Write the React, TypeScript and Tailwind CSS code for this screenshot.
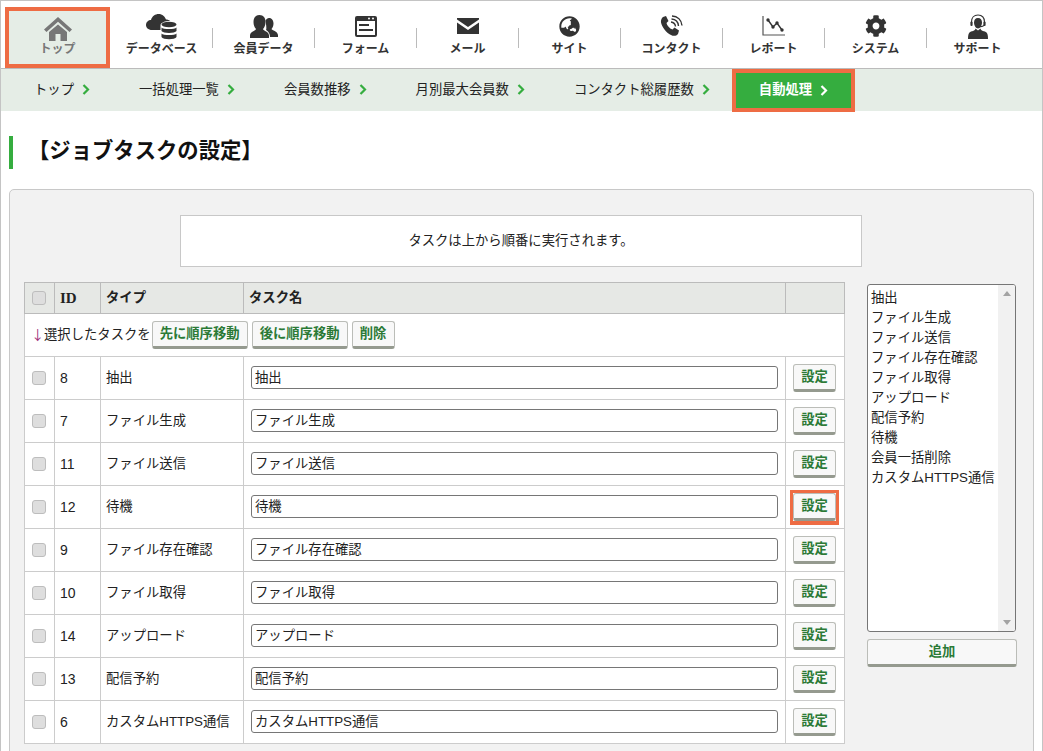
import { FaCog, FaGlobeAsia } from "react-icons/fa";

const FONT = "font-['Liberation_Sans','Noto_Sans_CJK_JP',sans-serif]";

function HomeIcon() {
  return (
    <svg width="28" height="24" viewBox="0 0 28 24" fill="#777">
      <path d="M14 0 L28 12.5 L25.5 15 L14 4.8 L2.5 15 L0 12.5 Z" />
      <path d="M5 15 L14 7.5 L23 15 V24 H16.5 V17 H11.5 V24 H5 Z" />
    </svg>
  );
}

function CloudDbIcon() {
  return (
    <svg width="31" height="27" viewBox="0 0 31 27" fill="#333">
      <path d="M6 17 C2 17 0 14.5 0 12 C0 9 2.5 7 5 7 C6 3 9.5 1 12.5 1 C16.5 1 19 3.5 20 6.5 C21.5 6.5 23 7 24 8 C19 8 15 9.5 14.5 12 V17 Z" />
      <ellipse cx="23" cy="11.5" rx="7.5" ry="2.8" />
      <path d="M15.5 14.5 C17 16.5 29 16.5 30.5 14.5 V18 C29 20.5 17 20.5 15.5 18 Z" />
      <path d="M15.5 20.5 C17 22.5 29 22.5 30.5 20.5 V24 C29 27 17 27 15.5 24 Z" />
    </svg>
  );
}

function UsersIcon() {
  return (
    <svg width="28" height="23" viewBox="0 0 28 23" fill="#333">
      <path d="M19 3 C22 3 23.5 5.5 23.5 8.5 C23.5 11 22.5 13 21.5 14 C22 15.5 27.5 16 28 20 V22 H20 C20 17.5 17 15.5 16 15 C17 14 15.5 6 15.5 5.5 C16.5 4 17.5 3 19 3 Z" />
      <path d="M9.5 0 C13.5 0 15.5 3 15.5 7 C15.5 10 14.5 12.5 13 14 C13.5 16 19 16.5 19 20.5 V23 H0 V20.5 C0 16.5 5.5 16 6 14 C4.5 12.5 3.5 10 3.5 7 C3.5 3 5.5 0 9.5 0 Z" />
    </svg>
  );
}

function FormIcon() {
  return (
    <svg width="22" height="21" viewBox="0 0 22 21" fill="none">
      <rect x="0" y="0" width="22" height="21" rx="2" fill="#333" />
      <rect x="2" y="5" width="18" height="14" fill="#fff" />
      <circle cx="14" cy="2.6" r="1" fill="#fff" />
      <circle cx="18" cy="2.6" r="1" fill="#fff" />
      <rect x="4" y="8" width="10" height="2" fill="#333" />
      <rect x="4" y="13" width="14" height="2" fill="#333" />
    </svg>
  );
}

function MailIcon() {
  return (
    <svg width="22" height="16" viewBox="0 0 22 16" fill="#333">
      <path d="M0 0 H22 V1.5 L11 9 L0 1.5 Z" />
      <path d="M0 4.5 L11 12 L22 4.5 V16 H0 Z" />
    </svg>
  );
}

function PhoneIcon() {
  return (
    <svg width="23" height="22" viewBox="0 0 23 22" fill="none">
      <path
        d="M3 2 L6 1 L8.5 6 L6.5 8 C7 10.5 9.5 13.5 12.5 14.5 L14.5 12.5 L19 15.5 L18 19 C16.5 21 13.5 21.5 11 20 C6 17.5 2 12 1 7.5 C0.7 5.5 1.5 3 3 2 Z"
        fill="#333"
      />
      <path d="M11 7 C13.5 7.3 15.2 9 15.5 11.5" stroke="#333" strokeWidth="1.4" />
      <path d="M11.5 4 C15.5 4.3 18.2 7 18.5 11" stroke="#333" strokeWidth="1.4" />
      <path d="M12 1 C17.5 1.3 21.5 5 22 10.5" stroke="#333" strokeWidth="1.4" />
    </svg>
  );
}

function ChartIcon() {
  return (
    <svg width="23" height="20" viewBox="0 0 23 20" fill="none">
      <path d="M1 0 V19 H23" stroke="#555" strokeWidth="1.2" />
      <path d="M6 4 L11 11 L15 7 L20 14" stroke="#333" strokeWidth="1.4" />
      <circle cx="6" cy="4" r="1.7" fill="#333" />
      <circle cx="11" cy="11" r="1.7" fill="#333" />
      <circle cx="15" cy="7" r="1.7" fill="#333" />
      <circle cx="20" cy="14" r="1.7" fill="#333" />
    </svg>
  );
}

function HeadsetIcon() {
  return (
    <svg width="20" height="25" viewBox="0 0 20 25" fill="none">
      <path d="M3.5 10 V8 C3.5 3.5 6 1 10 1 C14 1 16.5 3.5 16.5 8 V10 C16.5 12 15 12.6 12 12.6" stroke="#333" strokeWidth="1.1" />
      <path d="M10 4 C12.6 4 14 6 14 8.5 C14 11.5 12 14.5 10 14.5 C8 14.5 6 11.5 6 8.5 C6 6 7.4 4 10 4 Z" fill="#333" />
      <rect x="2.4" y="7.5" width="2.2" height="4.5" rx="1" fill="#333" />
      <rect x="15.4" y="7.5" width="2.2" height="4.5" rx="1" fill="#333" />
      <path d="M7.5 14.5 C7.5 17 3 17 1.5 18.5 C0.5 19.5 0 21 0 25 H20 C20 21 19.5 19.5 18.5 18.5 C17 17 12.5 17 12.5 14.5 L10 16.5 Z" fill="#333" />
    </svg>
  );
}

const NAV_ITEMS = [
  { label: "データベース", icon: <CloudDbIcon /> },
  { label: "会員データ", icon: <UsersIcon /> },
  { label: "フォーム", icon: <FormIcon /> },
  { label: "メール", icon: <MailIcon /> },
  { label: "サイト", icon: <FaGlobeAsia size={21} color="#333" /> },
  { label: "コンタクト", icon: <PhoneIcon /> },
  { label: "レポート", icon: <ChartIcon /> },
  { label: "システム", icon: <FaCog size={22} color="#333" /> },
  { label: "サポート", icon: <HeadsetIcon /> },
];

const SUB_ITEMS = [
  "トップ",
  "一括処理一覧",
  "会員数推移",
  "月別最大会員数",
  "コンタクト総履歴数",
];

const ROWS = [
  { id: 8, type: "抽出" },
  { id: 7, type: "ファイル生成" },
  { id: 11, type: "ファイル送信" },
  { id: 12, type: "待機", marked: true },
  { id: 9, type: "ファイル存在確認" },
  { id: 10, type: "ファイル取得" },
  { id: 14, type: "アップロード" },
  { id: 13, type: "配信予約" },
  { id: 6, type: "カスタムHTTPS通信" },
];

const LIST_ITEMS = [
  "抽出",
  "ファイル生成",
  "ファイル送信",
  "ファイル存在確認",
  "ファイル取得",
  "アップロード",
  "配信予約",
  "待機",
  "会員一括削除",
  "カスタムHTTPS通信",
];

function Chevron({ color }: { color: string }) {
  return (
    <svg width="8" height="11" viewBox="0 0 8 11" fill="none" className="shrink-0">
      <path d="M1.5 1 L6 5.5 L1.5 10" stroke={color} strokeWidth="2.2" />
    </svg>
  );
}

function CheckBox() {
  return (
    <input
      type="checkbox"
      className="block h-[14px] w-[14px] appearance-none rounded-[3px] border border-[#bdbdbd] bg-[#dedede]"
    />
  );
}

function GreenButton({ children, className }: { children: React.ReactNode; className: string }) {
  return (
    <button
      className={`flex items-center justify-center rounded-[3px] border border-b-[3px] border-[#bbbdb8] border-b-[#959a8f] bg-[#f8f8f8] text-[13.33px] font-bold text-[#2b7a36] ${className}`}
    >
      {children}
    </button>
  );
}

export default function App() {
  return (
    <div className={`${FONT} h-[751px] w-[1043px] overflow-hidden border-t border-r border-l border-[#c4c4c4] bg-white text-[13.33px] text-[#222]`}>
      {/* Global nav */}
      <div className="flex h-[68px] items-start border-b border-[#bbb] pl-2">
        <div className="mt-[10px] flex h-[53px] w-[97px] flex-col items-center bg-[#e5ede6] pt-[2px] outline-4 outline-[#ee6c44]">
          <div className="flex h-[28px] items-end">
            <HomeIcon />
          </div>
          <span className="text-[12px] leading-[16px] font-bold text-[#777]">トップ</span>
        </div>
        <div className="ml-[5px] flex">
          {NAV_ITEMS.map((item, i) => (
            <div key={item.label} className="flex">
              <div className="flex w-[101px] flex-col items-center pt-[11px]">
                <div className="flex h-[28px] items-center">{item.icon}</div>
                <span className="mt-[1px] text-[12px] leading-[16px] font-bold whitespace-nowrap text-[#333]">
                  {item.label}
                </span>
              </div>
              {i < NAV_ITEMS.length - 1 && <div className="mt-[27px] h-5 w-px bg-[#bbb]" />}
            </div>
          ))}
        </div>
      </div>

      {/* Sub nav */}
      <div className="flex h-[42px] items-center bg-[#e5ede6] pl-[8.5px]">
        {SUB_ITEMS.map((label) => (
          <div key={label} className="flex items-center gap-2 px-[24.5px]">
            <span className="whitespace-nowrap">{label}</span>
            <Chevron color="#35ad3f" />
          </div>
        ))}
        <div className="ml-[1.5px] flex h-[35px] w-[115px] items-center gap-2 bg-[#35ad3f] pl-[23px] font-bold text-white outline-4 outline-[#ee6c44]">
          <span className="whitespace-nowrap">自動処理</span>
          <Chevron color="#fff" />
        </div>
      </div>

      {/* Heading */}
      <div className="mt-[25px] ml-2 flex h-[33px] items-center border-l-4 border-[#35ad3f] pb-[2px] pl-[15px]">
        <h1 className="text-[21.33px] font-bold text-[#111]">【ジョブタスクの設定】</h1>
      </div>

      {/* Card */}
      <div className="mt-[20px] ml-2 h-[570px] w-[1025px] rounded-[5px] border border-[#c8c8c8] bg-[#f2f2f2] pt-[25px] pl-[14px]">
        <div className="ml-[156px] flex h-[52px] w-[682px] items-center justify-center border border-[#c8c8c8] bg-white">
          タスクは上から順番に実行されます。
        </div>

        <div className="mt-[15px] flex items-start">
          <table className="w-[820px] table-fixed border-collapse bg-white">
            <colgroup>
              <col className="w-[30px]" />
              <col className="w-[46px]" />
              <col className="w-[143px]" />
              <col className="w-[542px]" />
              <col className="w-[59px]" />
            </colgroup>
            <thead>
              <tr className="h-[31px] bg-[#e6e8e5] text-left font-bold">
                <th className="border border-[#bbb] pl-[7px]">
                  <CheckBox />
                </th>
                <th className="border border-[#bbb] pl-[5px] font-['Liberation_Serif',serif] text-[15px]">ID</th>
                <th className="border border-[#bbb] pl-[5px]">タイプ</th>
                <th className="border border-[#bbb] pl-[5px]">タスク名</th>
                <th className="border border-[#bbb]" />
              </tr>
            </thead>
            <tbody>
              <tr className="h-[43px]">
                <td colSpan={5} className="border border-[#ccc] pl-[7px]">
                  <div className="flex items-center">
                    <span className="-ml-[1px] w-[13px] font-['Noto_Sans_CJK_JP',sans-serif] text-[13.33px] text-[#a0307a]">↓</span>
                    <span className="whitespace-nowrap">選択したタスクを</span>
                    <GreenButton className="ml-[1px] h-[28px] w-[96px]">先に順序移動</GreenButton>
                    <GreenButton className="ml-1 h-[28px] w-[96px]">後に順序移動</GreenButton>
                    <GreenButton className="ml-1 h-[28px] w-[43px]">削除</GreenButton>
                  </div>
                </td>
              </tr>
              {ROWS.map((row) => (
                <tr key={row.id} className="h-[43px]">
                  <td className="border border-[#ccc] pl-[7px]">
                    <CheckBox />
                  </td>
                  <td className="border border-[#ccc] pl-[5px] text-[14px]">{row.id}</td>
                  <td className="border border-[#ccc] pl-[5px] whitespace-nowrap">{row.type}</td>
                  <td className="border border-[#ccc] pl-[7px]">
                    <input
                      readOnly
                      value={row.type}
                      className="mb-[1px] block h-[23px] w-[527px] rounded-[3px] border border-[#767676] bg-white px-[3px] pb-[3px] text-[#222]"
                    />
                  </td>
                  <td className="border border-[#ccc] pl-[7px]">
                    <div
                      className={
                        row.marked
                          ? "-mt-[3px] -mb-[4px] -ml-[3px] w-fit border-[3px] border-b-[4px] border-[#ee6c44]"
                          : ""
                      }
                    >
                      <GreenButton className="h-[28px] w-[43px]">設定</GreenButton>
                    </div>
                  </td>
                </tr>
              ))}
            </tbody>
          </table>

          {/* Task type list */}
          <div className="mt-[2px] ml-[22px] w-[150px]">
            <div className="flex h-[348px] w-[149px] overflow-hidden rounded-[3px] border border-[#767676] bg-white">
              <ul className="flex-1 pt-[3px] pl-[3px] leading-[20px] whitespace-nowrap">
                {LIST_ITEMS.map((item) => (
                  <li key={item}>{item}</li>
                ))}
              </ul>
              <div className="flex w-[17px] flex-col items-center justify-between bg-[#f1f1f1] py-[6px]">
                <svg width="8" height="5" viewBox="0 0 8 5" fill="#a3a3a3">
                  <path d="M4 0 L8 5 H0 Z" />
                </svg>
                <svg width="8" height="5" viewBox="0 0 8 5" fill="#a3a3a3">
                  <path d="M0 0 H8 L4 5 Z" />
                </svg>
              </div>
            </div>
            <GreenButton className="mt-[7px] h-[28px] w-[150px]">追加</GreenButton>
          </div>
        </div>
      </div>
    </div>
  );
}
